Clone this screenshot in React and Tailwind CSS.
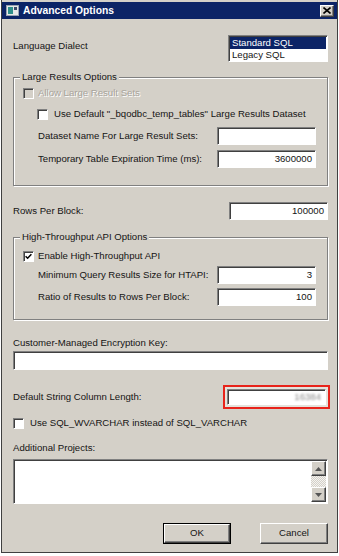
import React from 'react';

const sunken =
  'border border-t-[#808080] border-l-[#808080] border-b-white border-r-white shadow-[inset_1px_1px_0_#404040]';
const raised =
  'border border-t-white border-l-white border-b-[#404040] border-r-[#404040] shadow-[inset_-1px_-1px_0_#808080]';

const Check = ({ checked, disabled }) => (
  <span
    className={`w-[11px] h-[11px] shrink-0 flex items-center justify-center ${sunken} ${
      disabled ? 'bg-[#d4d0c8]' : 'bg-white'
    }`}
  >
    {checked && (
      <svg width="7" height="7" viewBox="0 0 7 7">
        <path d="M0.6 3.2 L2.6 5.2 L6.4 1.2" stroke="#000" strokeWidth="1.5" fill="none" />
      </svg>
    )}
  </span>
);

const TextBox = ({ value, className = '' }) => (
  <div className={`h-[18px] bg-white ${sunken} flex items-center justify-end pr-[3px] ${className}`}>
    {value}
  </div>
);

const Field = ({ label, value }) => (
  <div className="h-[18px] flex items-center justify-between">
    <span>{label}</span>
    <TextBox value={value} className="w-[99px]" />
  </div>
);

const Group = ({ title, className, children }) => (
  <div
    className={`border border-[#808080] shadow-[inset_1px_1px_0_#fff,1px_1px_0_#fff] ${className}`}
  >
    <div className="-mt-[7px] ml-[6px] w-fit px-[2px] h-[12px] leading-[12px] bg-[#d4d0c8]">{title}</div>
    {children}
  </div>
);

const Button = ({ children, isDefault }) => (
  <div className={`w-[68px] h-[21px] ${isDefault ? 'border border-black' : ''}`}>
    <div className={`w-full h-full ${raised} flex items-center justify-center`}>{children}</div>
  </div>
);

const Arrow = ({ up }) => (
  <div className={`h-[15px] bg-[#d4d0c8] ${raised} flex items-center justify-center`}>
    <svg width="7" height="4" viewBox="0 0 7 4">
      <path d={up ? 'M0 4 L3.5 0 L7 4 Z' : 'M0 0 L3.5 4 L7 0 Z'} fill="#555" />
    </svg>
  </div>
);

export default function App() {
  return (
    <div className="w-[339px] h-[556px] bg-white overflow-hidden font-['Liberation_Sans',Arial,sans-serif] text-[9.6px] text-[#141414]">
      <div className="ml-[1px] w-[337px] h-[553px] border-x border-b border-[#404040] bg-[#d4d0c8] flex flex-col">
        {/* title bar */}
        <div className="mt-[2px] h-[17px] bg-[#0c2466] flex items-center pl-[4px] pr-[3px]">
          <svg width="13" height="11" viewBox="0 0 13 11">
            <rect x="0.5" y="0.5" width="12" height="10" fill="#e8e8e8" stroke="#9aa4b0" />
            <rect x="2" y="2" width="5" height="7" fill="#2f8f8a" />
            <rect x="8" y="2" width="3" height="3" fill="#3a4a6a" />
          </svg>
          <span className="ml-[4px] text-white font-bold text-[10.3px]">Advanced Options</span>
          <div className={`ml-auto w-[14px] h-[12px] bg-[#d4d0c8] ${raised} flex items-center justify-center`}>
            <svg width="8" height="7" viewBox="0 0 8 7">
              <path d="M0.5 0.5 L7.5 6.5 M7.5 0.5 L0.5 6.5" stroke="#000" strokeWidth="1.6" />
            </svg>
          </div>
        </div>

        <div className="pl-[11px] pr-[9px] flex flex-col">
          {/* language dialect */}
          <div className="mt-[16px] h-[27px] flex items-center justify-between">
            <span className="-mt-[4px]">Language Dialect</span>
            <div className={`w-[100px] h-[27px] bg-white ${sunken} p-[1px] flex flex-col`}>
              <div className="h-[12px] leading-[12px] bg-[#0c2466] text-white pl-[2px]">Standard SQL</div>
              <div className="h-[12px] leading-[12px] pl-[2px]">Legacy SQL</div>
            </div>
          </div>

          {/* large results */}
          <Group title="Large Results Options" className="mt-[15px] h-[109px]">
            <div className="pl-[9px] pr-[11px] flex flex-col">
              <div className="mt-[4px] h-[12px] flex items-center gap-[4px]">
                <Check disabled />
                <span className="text-[#a8a49c] [text-shadow:1px_1px_0_#fff]">Allow Large Result Sets</span>
              </div>
              <div className="mt-[9px] h-[12px] flex items-center gap-[6px] pl-[14px]">
                <Check />
                <span>Use Default "_bqodbc_temp_tables" Large Results Dataset</span>
              </div>
              <div className="mt-[7px] pl-[15px]">
                <Field label="Dataset Name For Large Result Sets:" value="" />
              </div>
              <div className="mt-[5px] pl-[15px]">
                <Field label="Temporary Table Expiration Time (ms):" value="3600000" />
              </div>
            </div>
          </Group>

          {/* rows per block */}
          <div className="mt-[16px] h-[18px] flex items-center justify-between">
            <span>Rows Per Block:</span>
            <TextBox value="100000" className="w-[99px]" />
          </div>

          {/* high throughput */}
          <Group title="High-Throughput API Options" className="mt-[17px] h-[83px]">
            <div className="pl-[9px] pr-[11px] flex flex-col">
              <div className="mt-[7px] h-[12px] flex items-center gap-[4px]">
                <Check checked />
                <span>Enable High-Throughput API</span>
              </div>
              <div className="mt-[4px] pl-[15px]">
                <Field label="Minimum Query Results Size for HTAPI:" value="3" />
              </div>
              <div className="mt-[4px] pl-[15px]">
                <Field label="Ratio of Results to Rows Per Block:" value="100" />
              </div>
            </div>
          </Group>

          {/* encryption key */}
          <div className="mt-[17px] h-[12px] leading-[12px]">Customer-Managed Encryption Key:</div>
          <TextBox value="" className="mt-[2px] !h-[19px]" />

          {/* default string column length */}
          <div className="mt-[15px] h-[24px] flex items-center justify-between">
            <span>Default String Column Length:</span>
            <div className="-mr-[2px] w-[107px] h-[24px] border-[2px] border-[#e8231a] p-[2px] bg-[#e4e2dc]">
              <div className={`h-full bg-white ${sunken} flex items-center justify-end pr-[4px]`}>
                <span className="text-[#8a8a8a] blur-[1.2px]">16384</span>
              </div>
            </div>
          </div>

          <div className="mt-[8px] h-[12px] flex items-center gap-[6px]">
            <Check />
            <span>Use SQL_WVARCHAR instead of SQL_VARCHAR</span>
          </div>

          {/* additional projects */}
          <div className="mt-[13px] h-[12px] leading-[12px]">Additional Projects:</div>
          <div className={`mt-[5px] h-[45px] bg-white ${sunken} flex justify-end p-[1px]`}>
            <div className="w-[15px] h-full flex flex-col bg-[repeating-conic-gradient(#d4d0c8_0_25%,#f4f3f0_0_50%)] bg-[length:2px_2px]">
              <Arrow up />
              <div className="flex-1" />
              <Arrow />
            </div>
          </div>

          {/* buttons */}
          <div className="mt-[19px] flex justify-end gap-[29px]">
            <Button isDefault>OK</Button>
            <Button>Cancel</Button>
          </div>
        </div>
      </div>
    </div>
  );
}
